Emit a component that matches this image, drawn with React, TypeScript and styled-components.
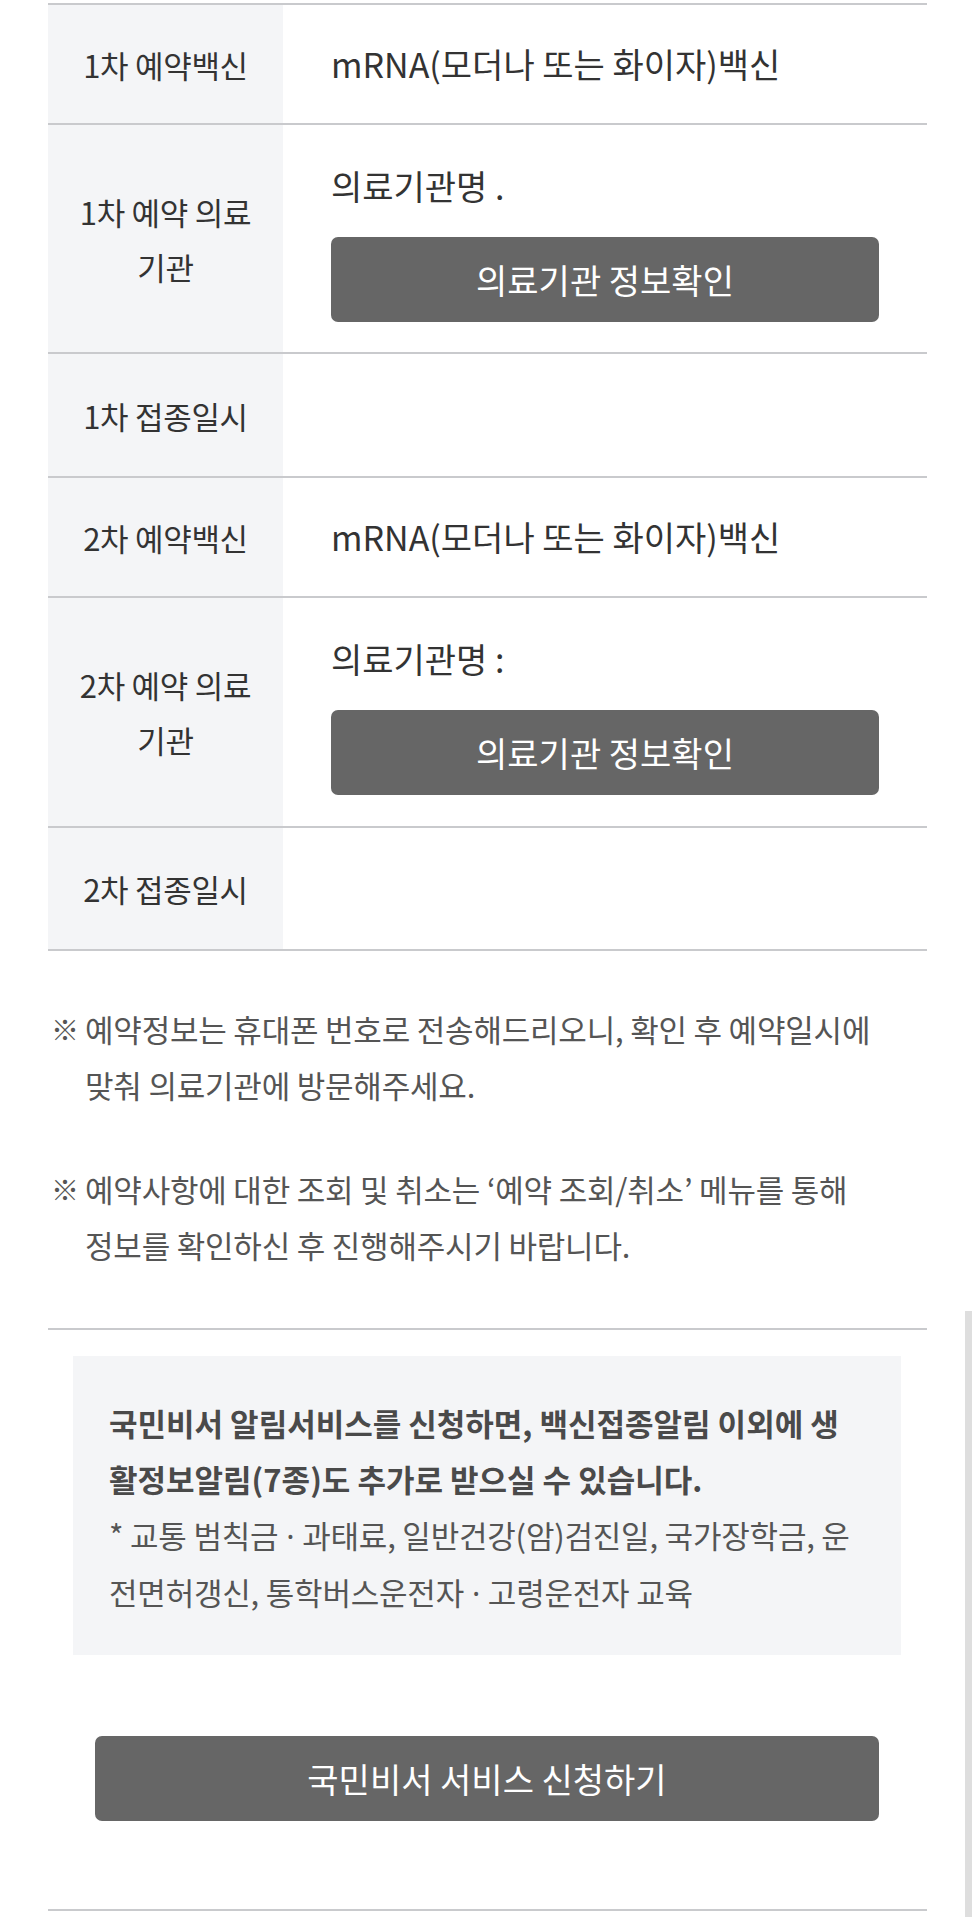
import React from 'react'
import styled, { createGlobalStyle } from 'styled-components'

const GlobalStyle = createGlobalStyle`
  html, body {
    margin: 0;
    padding: 0;
    background: #ffffff;
  }
  body {
    font-family: "Noto Sans CJK KR", "Noto Sans", sans-serif;
    color: #333333;
  }
`

interface RowData {
  label: string
  value?: string
  hospital?: string
  height: number
}

const rows: RowData[] = [
  { label: '1차 예약백신', value: 'mRNA(모더나 또는 화이자)백신', height: 118 },
  { label: '1차 예약 의료 기관', hospital: '의료기관명 .', height: 227 },
  { label: '1차 접종일시', height: 122 },
  { label: '2차 예약백신', value: 'mRNA(모더나 또는 화이자)백신', height: 118 },
  { label: '2차 예약 의료 기관', hospital: '의료기관명 :', height: 228 },
  { label: '2차 접종일시', height: 121 },
]

const notes = [
  ['예약정보는 휴대폰 번호로 전송해드리오니, 확인 후 예약일시에', '맞춰 의료기관에 방문해주세요.'],
  ['예약사항에 대한 조회 및 취소는 ‘예약 조회/취소’ 메뉴를 통해', '정보를 확인하신 후 진행해주시기 바랍니다.'],
]

const App = () => {
  return (
    <Page>
      <GlobalStyle />
      <Table>
        {rows.map((row) => (
          <Row key={row.label} $height={row.height}>
            <Label>{row.label}</Label>
            <Value $stacked={!!row.hospital}>
              {row.value && <ValueText>{row.value}</ValueText>}
              {row.hospital && (
                <>
                  <ValueText>{row.hospital}</ValueText>
                  <InfoButton type="button">의료기관 정보확인</InfoButton>
                </>
              )}
            </Value>
          </Row>
        ))}
      </Table>

      <Notes>
        {notes.map((lines, i) => (
          <Note key={i}>
            <Mark>※</Mark>
            <NoteBody>
              {lines.map((line) => (
                <Line key={line}>{line}</Line>
              ))}
            </NoteBody>
          </Note>
        ))}
      </Notes>

      <Divider />

      <InfoBox>
        <Line $bold>국민비서 알림서비스를 신청하면, 백신접종알림 이외에 생</Line>
        <Line $bold>활정보알림(7종)도 추가로 받으실 수 있습니다.</Line>
        <Line>
          * 교통 범칙금<Dot> · </Dot>과태료, 일반건강(암)검진일, 국가장학금, 운
        </Line>
        <Line>
          전면허갱신, 통학버스운전자<Dot> · </Dot>고령운전자 교육
        </Line>
      </InfoBox>

      <ApplyButton type="button">국민비서 서비스 신청하기</ApplyButton>

      <Divider $bottom />

      <ScrollThumb />
    </Page>
  )
}

const Page = styled.div`
  position: relative;
  width: 972px;
  min-height: 1917px;
  box-sizing: border-box;
  padding: 3px 45px 0 48px;
  overflow: hidden;
`

const Table = styled.div`
  border-top: 2px solid #c9cacd;
`

const Row = styled.div<{ $height: number }>`
  display: flex;
  min-height: ${(p) => p.$height}px;
  border-bottom: 2px solid #c9cacd;
`

const Label = styled.div`
  flex: 0 0 235px;
  box-sizing: border-box;
  padding: 0 28px;
  display: flex;
  align-items: center;
  justify-content: center;
  text-align: center;
  background: #f4f5f7;
  font-size: 31px;
  line-height: 55px;
  color: #333333;
  letter-spacing: -0.3px;
`

const Value = styled.div<{ $stacked: boolean }>`
  flex: 1;
  display: flex;
  flex-direction: column;
  justify-content: ${(p) => (p.$stacked ? 'flex-start' : 'center')};
  padding: ${(p) => (p.$stacked ? '34px 48px 30px 48px' : '0 48px')};
`

const ValueText = styled.div`
  font-size: 34px;
  line-height: 54px;
  color: #333333;
  white-space: nowrap;
`

const InfoButton = styled.button`
  margin-top: 24px;
  height: 85px;
  width: 100%;
  border: none;
  border-radius: 7px;
  background: #666666;
  color: #ffffff;
  font-family: inherit;
  font-size: 34px;
  cursor: pointer;
`

const Notes = styled.div`
  margin-top: 50px;
  display: flex;
  flex-direction: column;
  gap: 48px;
`

const Note = styled.div`
  display: flex;
  font-size: 31px;
  line-height: 56px;
  color: #555555;
`

const Mark = styled.span`
  flex: 0 0 37px;
  padding-left: 3px;
  box-sizing: border-box;
  font-size: 28px;
`

const NoteBody = styled.div`
  display: flex;
  flex-direction: column;
`

const Line = styled.div<{ $bold?: boolean }>`
  white-space: nowrap;
  font-weight: ${(p) => (p.$bold ? 700 : 400)};
  color: ${(p) => (p.$bold ? '#4a4a4a' : '#555555')};
  letter-spacing: ${(p) => (p.$bold ? '0' : '-0.2px')};
`

const Dot = styled.span`
  font-family: "Noto Sans", "Liberation Sans", sans-serif;
  font-weight: 400;
`

const Divider = styled.div<{ $bottom?: boolean }>`
  height: 2px;
  background: #c9cacd;
  margin-top: ${(p) => (p.$bottom ? '88px' : '55px')};
`

const InfoBox = styled.div`
  margin: 26px 26px 0 25px;
  padding: 39px 36px 34px 36px;
  background: #f4f5f7;
  font-size: 31px;
  line-height: 56px;
`

const ApplyButton = styled.button`
  display: block;
  margin: 81px 48px 0 47px;
  width: calc(100% - 95px);
  height: 85px;
  border: none;
  border-radius: 7px;
  background: #666666;
  color: #ffffff;
  font-family: inherit;
  font-size: 34px;
  cursor: pointer;
`

const ScrollThumb = styled.div`
  position: absolute;
  top: 1311px;
  right: 0;
  bottom: 0;
  width: 7px;
  background: #dedede;
`

export default App
